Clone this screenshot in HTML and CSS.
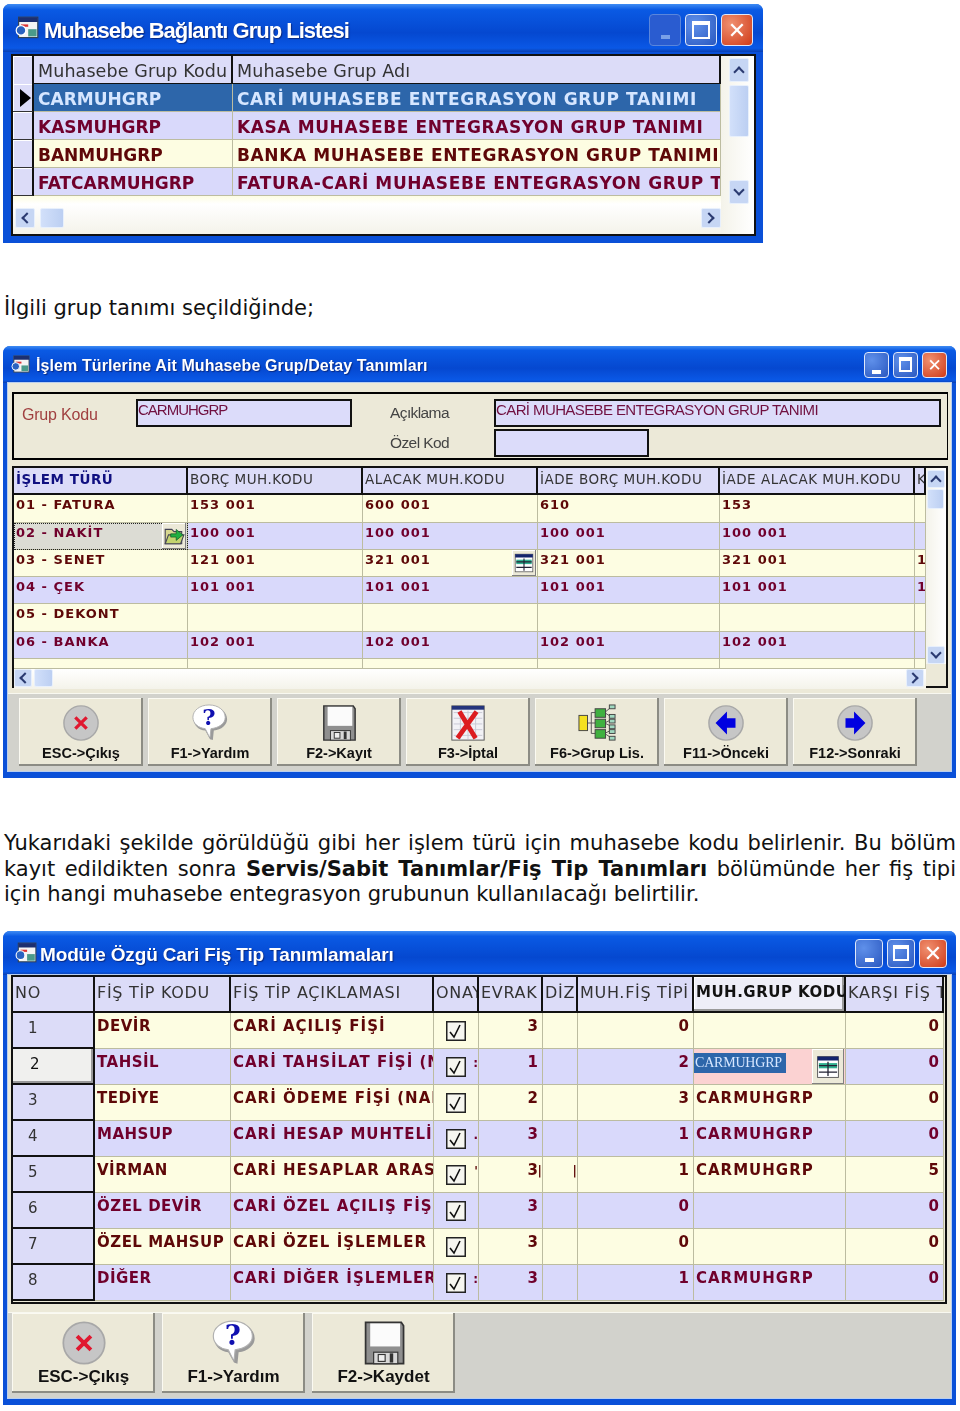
FILE: index.html
```html
<!DOCTYPE html>
<html lang="tr">
<head>
    <meta charset="UTF-8">
    <title>Muhasebe Grup Tanımları</title>
    <link rel="stylesheet" href="styles.css">
</head>
<body>
    <svg class="sprites" width="0" height="0">
        <symbol id="i-app" viewBox="0 0 20 20">
            <rect x="3" y="1" width="16" height="17" fill="#f4f4f4" stroke="#345"/>
            <rect x="3" y="1" width="16" height="4" fill="#1c2f70"/>
            <rect x="5" y="7" width="6" height="2" fill="#d33"/>
            <rect x="11" y="11" width="7" height="6" fill="#4a9a8a"/>
            <circle cx="5" cy="12" r="4" fill="#2a62c0" stroke="#fff"/>
        </symbol>
        <symbol id="i-esc" viewBox="0 0 40 40">
            <circle cx="20" cy="20" r="18" fill="#c6c6c6" stroke="#a8a8a8" stroke-width="1.5"/>
            <path d="M14 14 26 26M26 14 14 26" stroke="#e01830" stroke-width="3.4"/>
        </symbol>
        <symbol id="i-help" viewBox="0 0 40 40">
            <path d="M20 2C10 2 3 8 3 16c0 7 5 11 12 12l5 9 3 1 1-10c8-1 14-6 14-12C38 8 30 2 20 2z" fill="#9a9a9a"/>
            <path d="M19 1C9 1 2 7 2 14c0 7 6 11 13 12l4 8 1 1 1-9c8-1 15-5 15-12C36 7 29 1 19 1z" fill="#fff" stroke="#b0b0b0" stroke-width="1"/>
            <text x="19" y="22" class="help-mark">?</text>
        </symbol>
        <symbol id="i-save" viewBox="0 0 40 40">
            <path d="M4 2h31l2 3v33H4z" fill="#8f8f8f" stroke="#333" stroke-width="1.5"/>
            <rect x="8" y="3" width="26" height="20" fill="#fbfbfb"/>
            <rect x="11" y="28" width="21" height="10" fill="#d8d8d8" stroke="#333"/>
            <rect x="15" y="30" width="6" height="6" fill="#eee" stroke="#333"/>
            <rect x="25" y="29" width="3" height="8" fill="#333"/>
        </symbol>
        <symbol id="i-cancel" viewBox="0 0 40 40">
            <rect x="3" y="2" width="34" height="36" fill="#f2f2f6" stroke="#555"/>
            <rect x="3" y="2" width="34" height="4" fill="#24347c"/>
            <path d="M5 9h30M5 15h30M5 21h30M5 27h30M5 33h30M12 7v30M20 7v30M28 7v30" stroke="#c8c8d4" stroke-width="1"/>
            <path d="M11 8 28 36M29 8 9 36" stroke="#dc1c20" stroke-width="5"/>
        </symbol>
        <symbol id="i-tree" viewBox="0 0 40 40">
            <path d="M8 20h6M14 9v22M14 9h6M14 20h6M14 31h6M28 9l6-5M28 9l6 4M28 20l6-3M28 20l6 3M28 31l6-3M28 31l6 4" stroke="#555" fill="none"/>
            <rect x="1" y="12" width="9" height="16" fill="#f4e020" stroke="#444"/>
            <rect x="18" y="5" width="11" height="9" fill="#40b040" stroke="#444"/>
            <rect x="18" y="16" width="11" height="9" fill="#40b040" stroke="#444"/>
            <rect x="18" y="27" width="11" height="9" fill="#40b040" stroke="#444"/>
            <rect x="33" y="1" width="6" height="4" fill="#a0d8c0" stroke="#444"/>
            <rect x="33" y="11" width="6" height="4" fill="#a0d8c0" stroke="#444"/>
            <rect x="33" y="16" width="6" height="4" fill="#a0d8c0" stroke="#444"/>
            <rect x="33" y="22" width="6" height="4" fill="#a0d8c0" stroke="#444"/>
            <rect x="33" y="27" width="6" height="4" fill="#a0d8c0" stroke="#444"/>
            <rect x="33" y="34" width="6" height="4" fill="#a0d8c0" stroke="#444"/>
        </symbol>
        <symbol id="i-prev" viewBox="0 0 40 40">
            <circle cx="20" cy="20" r="18" fill="#c6c6c6" stroke="#a8a8a8" stroke-width="1.5"/>
            <path d="M9 20 21 8v7h9v10h-9v7z" fill="#0000e0"/>
        </symbol>
        <symbol id="i-next" viewBox="0 0 40 40">
            <circle cx="20" cy="20" r="18" fill="#c6c6c6" stroke="#a8a8a8" stroke-width="1.5"/>
            <path d="M31 20 19 8v7h-9v10h9v7z" fill="#0000e0"/>
        </symbol>
        <symbol id="i-check" viewBox="0 0 20 20">
            <rect x="0.75" y="0.75" width="18.5" height="18.5" fill="#f6f6f0" stroke="#222" stroke-width="1.5"/>
            <path d="M4 11l4 5L14 4" fill="none" stroke="#111" stroke-width="1.6"/>
        </symbol>
        <symbol id="i-lookup" viewBox="0 0 20 20">
            <rect x="2" y="2" width="16" height="16" fill="#fff" stroke="#555" stroke-width=".7"/>
            <rect x="2" y="2" width="16" height="3" fill="#14246c"/>
            <rect x="3" y="7" width="14" height="4" fill="#30b090"/>
            <path d="M3 9h14M3 14h14M10 6v11" stroke="#223" stroke-width="1"/>
        </symbol>
        <symbol id="i-folder" viewBox="0 0 20 20">
            <path d="M2 4h6l2 2h7v11H2z" fill="#d8d890" stroke="#445"/>
            <path d="M2 17 5 9h14l-3 8z" fill="#c4d470" stroke="#445"/>
            <path d="M7 8 12 8V4l6 5-6 5v-3H7z" fill="#20b040" stroke="#0a5020" stroke-width=".6"/>
        </symbol>
    </svg>

    <!-- grup listesi -->
    <section class="window win-list">
        <header class="titlebar">
            <svg class="app-icon"><use href="#i-app"/></svg>
            <span class="title">Muhasebe Bağlantı Grup Listesi</span>
            <span class="caption">
                <b class="cap cap-min"><i></i></b><b class="cap cap-max"><i></i></b><b class="cap cap-close">✕</b>
            </span>
        </header>
        <div class="grid-box">
            <div class="grid-main">
                <div class="table">
                    <div class="row head">
                        <div class="cell ind"></div>
                        <div class="cell">Muhasebe Grup Kodu</div>
                        <div class="cell">Muhasebe Grup Adı</div>
                    </div>
                    <div class="row selected">
                        <div class="cell ind"><span class="pointer"></span></div>
                        <div class="cell">CARMUHGRP</div>
                        <div class="cell">CARİ MUHASEBE ENTEGRASYON GRUP TANIMI</div>
                    </div>
                    <div class="row lav">
                        <div class="cell ind"></div>
                        <div class="cell">KASMUHGRP</div>
                        <div class="cell">KASA MUHASEBE ENTEGRASYON GRUP TANIMI</div>
                    </div>
                    <div class="row cream">
                        <div class="cell ind"></div>
                        <div class="cell">BANMUHGRP</div>
                        <div class="cell">BANKA MUHASEBE ENTEGRASYON GRUP TANIMI</div>
                    </div>
                    <div class="row lav">
                        <div class="cell ind"></div>
                        <div class="cell">FATCARMUHGRP</div>
                        <div class="cell">FATURA-CARİ MUHASEBE ENTEGRASYON GRUP TANIMI</div>
                    </div>
                    <div class="table-fill"></div>
                </div>
                <div class="hscroll">
                    <span class="sb-btn sb-left"></span><span class="sb-thumb"></span><span class="sb-gap"></span><span class="sb-btn sb-right"></span>
                </div>
            </div>
            <div class="vscroll">
                <span class="sb-btn sb-up"></span><span class="sb-thumb"></span><span class="sb-gap"></span><span class="sb-btn sb-down"></span>
            </div>
        </div>
    </section>

    <p class="note first-note">İlgili grup tanımı seçildiğinde;</p>

    <!-- islem turleri -->
    <section class="window win-detail">
        <header class="titlebar">
            <svg class="app-icon"><use href="#i-app"/></svg>
            <span class="title">İşlem Türlerine Ait Muhasebe Grup/Detay Tanımları</span>
            <span class="caption">
                <b class="cap cap-min"><i></i></b><b class="cap cap-max"><i></i></b><b class="cap cap-close">✕</b>
            </span>
        </header>
        <div class="client">
            <div class="form-box">
                <label class="form-label code-label">Grup Kodu</label>
                <div class="input code-input">CARMUHGRP</div>
                <label class="form-label">Açıklama</label>
                <div class="input">CARİ MUHASEBE ENTEGRASYON GRUP TANIMI</div>
                <label class="form-label special-label">Özel Kod</label>
                <div class="input special-input"></div>
            </div>
            <div class="grid-box">
                <div class="grid-main">
                    <div class="table">
                        <div class="row head">
                            <div class="cell strong">İŞLEM TÜRÜ</div>
                            <div class="cell">BORÇ MUH.KODU</div>
                            <div class="cell">ALACAK MUH.KODU</div>
                            <div class="cell">İADE BORÇ MUH.KODU</div>
                            <div class="cell">İADE ALACAK MUH.KODU</div>
                            <div class="cell">KARŞI</div>
                        </div>
                        <div class="row cream">
                            <div class="cell">01 - FATURA</div>
                            <div class="cell">153 001</div>
                            <div class="cell">600 001</div>
                            <div class="cell">610</div>
                            <div class="cell">153</div>
                            <div class="cell"></div>
                        </div>
                        <div class="row lav">
                            <div class="cell focus">02 - NAKİT<span class="cell-btn"><svg><use href="#i-folder"/></svg></span></div>
                            <div class="cell">100 001</div>
                            <div class="cell">100 001</div>
                            <div class="cell">100 001</div>
                            <div class="cell">100 001</div>
                            <div class="cell"></div>
                        </div>
                        <div class="row cream">
                            <div class="cell">03 - SENET</div>
                            <div class="cell">121 001</div>
                            <div class="cell">321 001<span class="cell-btn"><svg><use href="#i-lookup"/></svg></span></div>
                            <div class="cell">321 001</div>
                            <div class="cell">321 001</div>
                            <div class="cell">1</div>
                        </div>
                        <div class="row lav">
                            <div class="cell">04 - ÇEK</div>
                            <div class="cell">101 001</div>
                            <div class="cell">101 001</div>
                            <div class="cell">101 001</div>
                            <div class="cell">101 001</div>
                            <div class="cell">1</div>
                        </div>
                        <div class="row cream">
                            <div class="cell">05 - DEKONT</div>
                            <div class="cell"></div>
                            <div class="cell"></div>
                            <div class="cell"></div>
                            <div class="cell"></div>
                            <div class="cell"></div>
                        </div>
                        <div class="row lav">
                            <div class="cell">06 - BANKA</div>
                            <div class="cell">102 001</div>
                            <div class="cell">102 001</div>
                            <div class="cell">102 001</div>
                            <div class="cell">102 001</div>
                            <div class="cell"></div>
                        </div>
                        <div class="row cream tail">
                            <div class="cell"></div>
                            <div class="cell"></div>
                            <div class="cell"></div>
                            <div class="cell"></div>
                            <div class="cell"></div>
                            <div class="cell"></div>
                        </div>
                    </div>
                    <div class="hscroll">
                        <span class="sb-btn sb-left"></span><span class="sb-thumb"></span><span class="sb-gap"></span><span class="sb-btn sb-right"></span>
                    </div>
                </div>
                <div class="vscroll">
                    <span class="sb-btn sb-up"></span><span class="sb-thumb"></span><span class="sb-gap"></span><span class="sb-btn sb-down"></span>
                </div>
            </div>
            <div class="toolbar">
                <button class="tool"><svg><use href="#i-esc"/></svg><span>ESC-&gt;Çıkış</span></button>
                <button class="tool"><svg><use href="#i-help"/></svg><span>F1-&gt;Yardım</span></button>
                <button class="tool"><svg><use href="#i-save"/></svg><span>F2-&gt;Kayıt</span></button>
                <button class="tool"><svg><use href="#i-cancel"/></svg><span>F3-&gt;İptal</span></button>
                <button class="tool"><svg><use href="#i-tree"/></svg><span>F6-&gt;Grup Lis.</span></button>
                <button class="tool"><svg><use href="#i-prev"/></svg><span>F11-&gt;Önceki</span></button>
                <button class="tool"><svg><use href="#i-next"/></svg><span>F12-&gt;Sonraki</span></button>
            </div>
        </div>
    </section>

    <p class="note body-note">Yukarıdaki şekilde görüldüğü gibi her işlem türü için muhasebe kodu belirlenir. Bu bölüm kayıt edildikten sonra <strong>Servis/Sabit Tanımlar/Fiş Tip Tanımları</strong> bölümünde her fiş tipi için hangi muhasebe entegrasyon grubunun kullanılacağı belirtilir.</p>

    <!-- fis tipleri -->
    <section class="window win-fis">
        <header class="titlebar">
            <svg class="app-icon"><use href="#i-app"/></svg>
            <span class="title">Modüle Özgü Cari Fiş Tip Tanımlamaları</span>
            <span class="caption">
                <b class="cap cap-min"><i></i></b><b class="cap cap-max"><i></i></b><b class="cap cap-close">✕</b>
            </span>
        </header>
        <div class="client">
            <div class="grid-box">
                <div class="table">
                    <div class="row head">
                        <div class="cell">NO</div>
                        <div class="cell">FİŞ TİP KODU</div>
                        <div class="cell">FİŞ TİP AÇIKLAMASI</div>
                        <div class="cell">ONAY</div>
                        <div class="cell">EVRAK</div>
                        <div class="cell">DİZ</div>
                        <div class="cell">MUH.FİŞ TİPİ</div>
                        <div class="cell sorted">MUH.GRUP KODU</div>
                        <div class="cell">KARŞI FİŞ TİPİ</div>
                    </div>
                    <div class="row cream">
                        <div class="cell no">1</div>
                        <div class="cell">DEVİR</div>
                        <div class="cell">CARİ AÇILIŞ FİŞİ</div>
                        <div class="cell box"><svg><use href="#i-check"/></svg></div>
                        <div class="cell num">3</div>
                        <div class="cell"></div>
                        <div class="cell num">0</div>
                        <div class="cell"></div>
                        <div class="cell num">0</div>
                    </div>
                    <div class="row lav">
                        <div class="cell no current">2</div>
                        <div class="cell">TAHSİL</div>
                        <div class="cell">CARİ TAHSİLAT FİŞİ (NAKİT)</div>
                        <div class="cell box"><svg><use href="#i-check"/></svg><i class="frag">:</i></div>
                        <div class="cell num">1</div>
                        <div class="cell"></div>
                        <div class="cell num">2</div>
                        <div class="cell editing"><span class="edit-text">CARMUHGRP</span><span class="cell-btn"><svg><use href="#i-lookup"/></svg></span></div>
                        <div class="cell num">0</div>
                    </div>
                    <div class="row cream">
                        <div class="cell no">3</div>
                        <div class="cell">TEDİYE</div>
                        <div class="cell">CARİ ÖDEME FİŞİ (NAKİT)</div>
                        <div class="cell box"><svg><use href="#i-check"/></svg></div>
                        <div class="cell num">2</div>
                        <div class="cell"></div>
                        <div class="cell num">3</div>
                        <div class="cell">CARMUHGRP</div>
                        <div class="cell num">0</div>
                    </div>
                    <div class="row lav">
                        <div class="cell no">4</div>
                        <div class="cell">MAHSUP</div>
                        <div class="cell">CARİ HESAP MUHTELİF</div>
                        <div class="cell box"><svg><use href="#i-check"/></svg><i class="frag">.</i></div>
                        <div class="cell num">3</div>
                        <div class="cell"></div>
                        <div class="cell num">1</div>
                        <div class="cell">CARMUHGRP</div>
                        <div class="cell num">0</div>
                    </div>
                    <div class="row cream">
                        <div class="cell no">5</div>
                        <div class="cell">VİRMAN</div>
                        <div class="cell">CARİ HESAPLAR ARASI</div>
                        <div class="cell box"><svg><use href="#i-check"/></svg><i class="frag">'</i></div>
                        <div class="cell num">3<i class="frag">|</i></div>
                        <div class="cell"><i class="frag">|</i></div>
                        <div class="cell num">1</div>
                        <div class="cell">CARMUHGRP</div>
                        <div class="cell num">5</div>
                    </div>
                    <div class="row lav">
                        <div class="cell no">6</div>
                        <div class="cell">ÖZEL DEVİR</div>
                        <div class="cell">CARİ ÖZEL AÇILIŞ FİŞİ</div>
                        <div class="cell box"><svg><use href="#i-check"/></svg></div>
                        <div class="cell num">3</div>
                        <div class="cell"></div>
                        <div class="cell num">0</div>
                        <div class="cell"></div>
                        <div class="cell num">0</div>
                    </div>
                    <div class="row cream">
                        <div class="cell no">7</div>
                        <div class="cell">ÖZEL MAHSUP</div>
                        <div class="cell">CARİ ÖZEL İŞLEMLER</div>
                        <div class="cell box"><svg><use href="#i-check"/></svg></div>
                        <div class="cell num">3</div>
                        <div class="cell"></div>
                        <div class="cell num">0</div>
                        <div class="cell"></div>
                        <div class="cell num">0</div>
                    </div>
                    <div class="row lav">
                        <div class="cell no">8</div>
                        <div class="cell">DİĞER</div>
                        <div class="cell">CARİ DİĞER İŞLEMLER</div>
                        <div class="cell box"><svg><use href="#i-check"/></svg><i class="frag">:</i></div>
                        <div class="cell num">3</div>
                        <div class="cell"></div>
                        <div class="cell num">1</div>
                        <div class="cell">CARMUHGRP</div>
                        <div class="cell num">0</div>
                    </div>
                </div>
            </div>
            <div class="toolbar">
                <button class="tool"><svg><use href="#i-esc"/></svg><span>ESC-&gt;Çıkış</span></button>
                <button class="tool"><svg><use href="#i-help"/></svg><span>F1-&gt;Yardım</span></button>
                <button class="tool"><svg><use href="#i-save"/></svg><span>F2-&gt;Kaydet</span></button>
            </div>
        </div>
    </section>
</body>
</html>
```

FILE: styles.css
```css
body {
    margin: 0;
    padding: 4px 4px 0 3px;
    background-color: #ffffff;
    color: #111111;
    font-family: "DejaVu Sans", sans-serif;
}
.sprites {
    position: absolute;
}
.help-mark {
    font: bold 24px "DejaVu Serif", serif;
    fill: #1010b0;
    text-anchor: middle;
}

/* text between the windows */
.note {
    margin: 0 0 0 1px;
    font-size: 21px;
    line-height: 25.5px;
}
.first-note {
    margin-top: 53px;
    margin-bottom: 24.5px;
}
.body-note {
    margin-top: 53px;
    margin-bottom: 23.5px;
    text-align: justify;
}

/* window frame */
.window {
    box-sizing: border-box;
    background-color: #0a50d8;
    border-radius: 7px 7px 0 0;
    padding: 0 5px 7px;
    filter: blur(0.4px);
}
.win-list {
    width: 760px;
    height: 239px;
    padding: 0 7px 7px 8px;
}
.win-detail {
    width: 953px;
    height: 432px;
}
.win-fis {
    width: 953px;
    height: 474px;
}
.titlebar {
    display: flex;
    align-items: center;
    margin: 0 -5px;
    padding: 0 9px 0 8px;
    background: linear-gradient(#3f8cf3 0, #0a5ae4 12%, #0548d0 60%, #0a58e6 92%, #0a3fb0 100%);
    border-radius: 7px 7px 0 0;
}
.win-list .titlebar {
    height: 48px;
    margin: 0 -7px 0 -8px;
    padding: 0 10px 0 12px;
}
.win-detail .titlebar {
    height: 37px;
}
.win-fis .titlebar {
    height: 44px;
    padding-left: 12px;
}
.app-icon {
    width: 24px;
    height: 24px;
    margin-right: 5px;
    flex: none;
}
.win-detail .app-icon {
    width: 19px;
    height: 19px;
    margin-right: 6px;
}
.win-fis .app-icon {
    width: 22px;
    height: 22px;
    margin-right: 3px;
}
.title {
    color: #ffffff;
    font-family: "Liberation Sans", sans-serif;
    font-weight: bold;
    text-shadow: 1px 1px 1px #0a2a80;
    white-space: nowrap;
}
.win-list .title {
    font-size: 22px;
    letter-spacing: -1px;
    margin-top: 6px;
}
.win-detail .title {
    font-size: 16px;
    letter-spacing: 0.1px;
    margin-top: 3px;
}
.win-fis .title {
    font-size: 19px;
    letter-spacing: -0.15px;
    margin-top: 4px;
}
.caption {
    display: flex;
    gap: 4px;
    margin-left: auto;
}
.cap {
    box-sizing: border-box;
    display: flex;
    align-items: center;
    justify-content: center;
    width: 32px;
    height: 32px;
    border: 1px solid #dfe8fa;
    border-radius: 4px;
    background: radial-gradient(circle at 30% 30%, #5f90ea, #2a58c0);
    color: #ffffff;
    font-size: 22px;
    font-weight: bold;
}
.win-list .caption {
    margin-top: 4px;
}
.win-list .cap-min {
    border-color: #5a86dc;
    background: #2a5cd0;
}
.win-detail .cap {
    width: 25px;
    height: 26px;
    font-size: 17px;
}
.win-fis .cap {
    width: 28px;
    height: 29px;
}
.cap-close {
    background: radial-gradient(circle at 30% 30%, #f09070, #cf3a18);
}
.cap-min i {
    width: 9px;
    height: 4px;
    margin-top: 14px;
    background-color: #ffffff;
}
.win-list .cap-min i {
    background-color: #7aa0e8;
}
.cap-max i {
    box-sizing: border-box;
    width: 60%;
    height: 60%;
    border: 2px solid #ffffff;
    border-top-width: 4px;
}

/* client area */
.client {
    display: flex;
    flex-direction: column;
    background-color: #ece9d8;
    box-shadow: 0 0 0 1px #b8cef0;
}
.win-detail .client {
    height: 388px;
    padding-top: 9px;
    box-sizing: border-box;
}
.win-fis .client {
    height: 423px;
}
.form-box {
    box-sizing: border-box;
    display: grid;
    grid-template-columns: 114px 216px 38px 104px 447px;
    grid-auto-rows: 28px;
    row-gap: 2px;
    height: 69px;
    margin: 0 3px 0 4px;
    padding: 5px 0 0 8px;
    border: 2px solid #000000;
    border-right-width: 1px;
    font-family: "Liberation Sans", sans-serif;
}
.form-label {
    grid-column: 4;
    align-self: center;
    font-size: 15.5px;
    letter-spacing: -0.6px;
    color: #444444;
}
.form-label.code-label {
    grid-column: 1;
    margin-top: 3px;
    font-size: 16px;
    letter-spacing: -0.2px;
    color: #a04040;
}
.form-label.special-label {
    grid-row: 2;
}
.input {
    grid-column: 5;
    box-sizing: border-box;
    border: 2px solid #111111;
    background-color: #dcdcfa;
    color: #701040;
    font-size: 15px;
    line-height: 17px;
    letter-spacing: -0.6px;
    white-space: nowrap;
}
.input.code-input {
    grid-column: 2;
    letter-spacing: -1px;
}
.input.special-input {
    grid-column: 5;
    grid-row: 2;
    width: 155px;
}

/* data grids */
.grid-box {
    box-sizing: border-box;
    display: flex;
    border: 2px solid #111111;
    background-color: #ece9d8;
}
.grid-main {
    flex: 1;
    min-width: 0;
    display: flex;
    flex-direction: column;
}
.table {
    flex: 1;
    display: flex;
    flex-direction: column;
    background-color: #fdfde2;
}
.row {
    display: grid;
    box-sizing: border-box;
}
.cell {
    position: relative;
    box-sizing: border-box;
    overflow: hidden;
    white-space: nowrap;
    padding: 0 0 0 2px;
    border-right: 1px solid #bcbca0;
    border-bottom: 1px solid #bcbca0;
    font-weight: bold;
    letter-spacing: 1px;
}
.row.lav .cell {
    background-color: #d9d9fb;
    color: #70002c;
}
.row.cream .cell {
    background-color: #fdfde2;
    color: #5e0808;
}
.row.selected .cell {
    background-color: #2d66aa;
    color: #d6e6ff;
}
.row.head .cell {
    background-color: #dcdcf8;
    color: #333333;
    font-weight: normal;
    border-right: 2px solid #111111;
    border-bottom: 2px solid #111111;
}
.row.head .cell.strong {
    font-weight: bold;
    color: #101080;
}
.ind {
    background-color: #dcdcf8 !important;
    border-right: 2px solid #111111 !important;
    border-bottom: 1px solid #333333 !important;
    box-shadow: inset 1px 1px #ffffff;
}
.pointer {
    display: block;
    margin: 5px 0 0 3px;
    width: 0;
    height: 0;
    border-left: 11px solid #000000;
    border-top: 9px solid transparent;
    border-bottom: 9px solid transparent;
}
.table-fill {
    flex: 1;
    background: linear-gradient(#fdfde2, #ffffff);
}
.cell-btn {
    position: absolute;
    right: 1px;
    top: 0;
    bottom: 0;
    width: 24px;
    display: flex;
    align-items: center;
    justify-content: center;
    background-color: #ece9d8;
    box-shadow: inset -1px -1px #808080, inset 1px 1px #ffffff;
}
.cell-btn svg {
    width: 22px;
    height: 22px;
}
.frag {
    position: absolute;
    right: 0;
    top: 6px;
    font-size: 12px;
    font-style: normal;
    line-height: 16px;
    letter-spacing: 0;
}

/* scrollbars */
.hscroll, .vscroll {
    display: flex;
    flex: none;
    box-sizing: border-box;
}
.hscroll {
    height: 20px;
    padding-right: 2px;
    background: linear-gradient(#ffffff, #f4f3ea);
}
.vscroll {
    flex-direction: column;
    width: 20px;
    padding: 2px 1px 22px 1px;
    background: linear-gradient(90deg, #f4f3ea, #ffffff) no-repeat top / 100% calc(100% - 22px);
}
.sb-gap {
    flex: 1;
}
.sb-btn {
    display: flex;
    align-items: center;
    justify-content: center;
    flex: none;
    box-sizing: border-box;
    width: 18px;
    height: 18px;
    background-color: #c6d6f4;
    border: 1px solid #e8f0fc;
    border-radius: 2px;
}
.sb-btn::before {
    content: "";
    width: 6px;
    height: 6px;
    border: solid #2a3a70;
    border-width: 2px 0 0 2px;
}
.sb-up::before {
    margin-top: 4px;
    transform: rotate(45deg);
}
.sb-down::before {
    margin-top: -4px;
    transform: rotate(225deg);
}
.sb-left::before {
    margin-left: 4px;
    transform: rotate(-45deg);
}
.sb-right::before {
    margin-left: -4px;
    transform: rotate(135deg);
}
.sb-thumb {
    flex: none;
    box-sizing: border-box;
    width: 19px;
    height: 18px;
    margin-left: 2px;
    background: linear-gradient(90deg, #d2e0fa, #bccff2);
    border: 1px solid #e8f0fc;
    border-radius: 2px;
}

/* grup listesi */
.win-list .grid-box {
    height: 182px;
    margin-top: 2px;
}
.win-list .row {
    grid-template-columns: 21px 199px 1fr;
    height: 28px;
}
.win-list .cell {
    padding-left: 4px;
    font-size: 17px;
    line-height: 30px;
    letter-spacing: 0.6px;
}
.win-list .row .cell:nth-child(2) {
    letter-spacing: 0;
}
.win-list .row.head .cell {
    font-size: 17.5px;
    letter-spacing: 0.1px;
    height: 29px;
}
.win-list .vscroll {
    width: 33px;
    padding: 2px 5px 30px 8px;
    background-size: 100% 100%;
}
.win-list .vscroll .sb-btn {
    width: 20px;
    height: 24px;
}
.win-list .vscroll .sb-thumb {
    width: 20px;
    height: 52px;
    margin: 3px 0 0;
}
.win-list .hscroll {
    height: 30px;
    padding: 4px 0 0 2px;
}
.win-list .hscroll .sb-btn {
    width: 20px;
    height: 20px;
}
.win-list .hscroll .sb-thumb {
    width: 24px;
    height: 20px;
    margin-left: 5px;
}

/* islem turleri */
.win-detail .grid-box {
    height: 222px;
    margin: 6px 3px 0 4px;
}
.win-detail .row {
    grid-template-columns: 174px 175px 175px 182px 195px 1fr;
    height: 27.3px;
}
.win-detail .cell {
    font-size: 13px;
    line-height: 20px;
    letter-spacing: 1px;
}
.win-detail .row.head .cell {
    font-size: 13.5px;
    line-height: 22px;
    letter-spacing: 0.5px;
    height: 27px;
}
.win-detail .focus {
    background-color: #dcdcd4 !important;
    outline: 1px dotted #222222;
    outline-offset: -1px;
}
.win-detail .tail {
    height: 10px;
}
.win-detail .vscroll .sb-thumb {
    width: 17px;
    height: 20px;
    margin: 1px 0 0;
}
.win-detail .hscroll .sb-thumb {
    height: 18px;
}

/* fis tipleri */
.win-fis .grid-box {
    display: block;
    height: 329px;
    margin: 0 4px 0 3px;
    padding: 0 1px 2px 0;
}
.win-fis .row {
    grid-template-columns: 82px 136px 203px 45px 64px 35px 116px 152px 1fr;
    height: 36px;
}
.win-fis .cell {
    font-size: 15px;
    line-height: 26px;
    letter-spacing: 1px;
}
.win-fis .row .cell:nth-child(2) {
    letter-spacing: 0.5px;
}
.win-fis .row.head .cell {
    font-size: 16px;
    letter-spacing: 0.7px;
    line-height: 31px;
}
.win-fis .row.head .sorted {
    font-size: 15px;
    letter-spacing: 0.5px;
    font-weight: bold;
    color: #111111;
    background-color: #eeeef8;
    box-shadow: inset -2px -2px #9a9a9a, inset 1px 1px #ffffff;
}
.win-fis .no {
    background-color: #dcdcf8 !important;
    color: #333333 !important;
    font-weight: normal;
    padding-left: 15px;
    border-right: 2px solid #111111;
    border-bottom: 2px solid #111111;
    line-height: 30px;
}
.win-fis .no.current {
    background-color: #f0f0ee !important;
    box-shadow: inset -2px -2px #999999;
    color: #111111 !important;
    padding-left: 17px;
}
.win-fis .num {
    text-align: right;
    padding-right: 3px;
}
.win-fis .box {
    display: flex;
    justify-content: center;
    align-items: center;
    padding: 0;
}
.box svg {
    width: 20px;
    height: 20px;
}
.win-fis .editing {
    background-color: #fbd2d2 !important;
    padding-left: 0;
}
.win-fis .editing .cell-btn {
    width: 32px;
}
.win-fis .editing .cell-btn svg {
    width: 26px;
    height: 26px;
}
.edit-text {
    display: inline-block;
    padding-left: 1px;
    width: 91px;
    background-color: #2d66aa;
    color: #d6e6ff;
    font-family: "Liberation Serif", serif;
    font-size: 14px;
    font-weight: normal;
    line-height: 20px;
    letter-spacing: -0.2px;
}

/* buttons */
.toolbar {
    display: flex;
    flex: 1;
    background-color: #d2d2cc;
    border-top: 1px solid #f8f8f0;
}
.win-detail .toolbar {
    gap: 5px;
    margin-top: 5px;
    padding: 4px 0 5px 11px;
}
.win-fis .toolbar {
    gap: 7px;
    margin-top: 8px;
    padding: 0 0 5px 4px;
}
.tool {
    display: flex;
    flex-direction: column;
    align-items: center;
    flex: none;
    border: none;
    padding: 0;
    background-color: #ece9d8;
    box-shadow: inset -2px -2px #8c8c84, inset 1px 1px #fbfaf2;
    color: #111111;
    font-family: "Liberation Sans", sans-serif;
    font-weight: bold;
}
.win-detail .tool {
    width: 124px;
    height: 68px;
    padding-top: 6px;
    font-size: 14.5px;
}
.win-detail .tool svg {
    width: 38px;
    height: 38px;
    margin-bottom: 3px;
}
.win-fis .tool {
    width: 143px;
    height: 80px;
    padding-top: 7px;
    font-size: 17px;
}
.win-fis .tool svg {
    width: 46px;
    height: 46px;
    margin-bottom: 1px;
}
```
